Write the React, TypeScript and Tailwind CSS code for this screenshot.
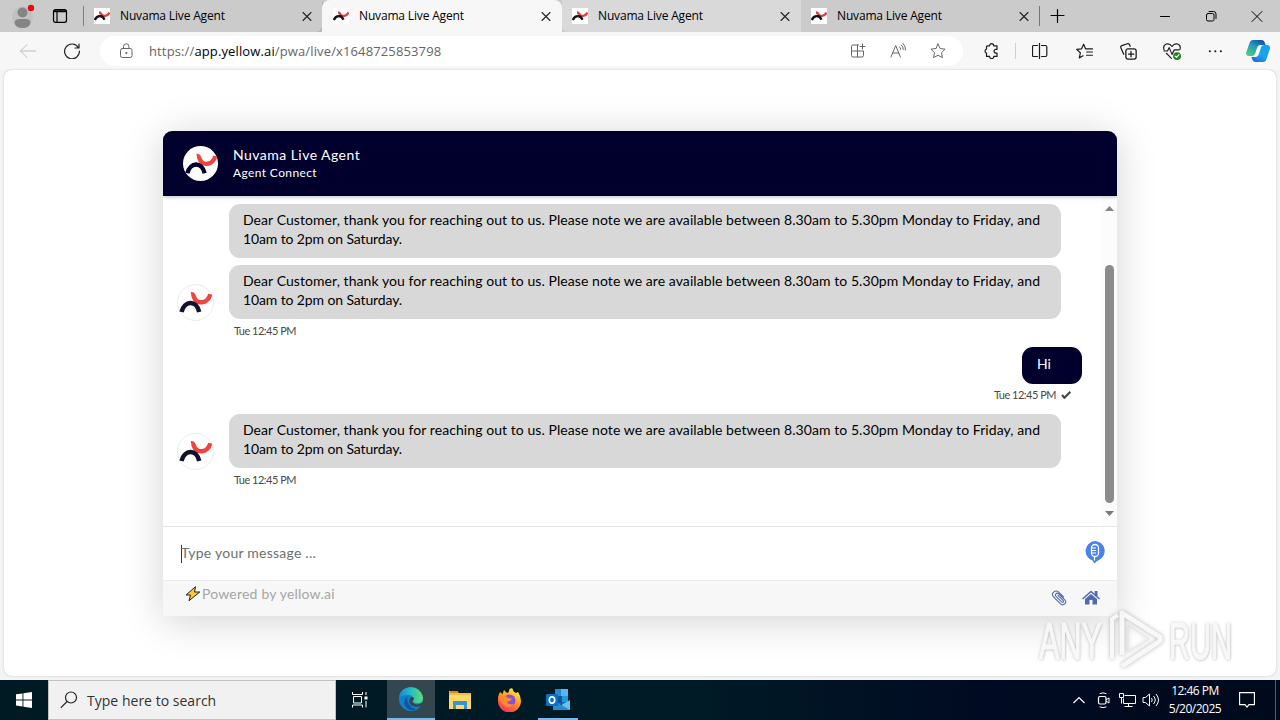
import type { ReactNode } from "react";

const MESSAGE_1 =
  "Dear Customer, thank you for reaching out to us. Please note we are available between 8.30am to 5.30pm Monday to Friday, and";
const MESSAGE_2 = "10am to 2pm on Saturday.";

function Icon({ children, className = "size-4" }: { children: ReactNode; className?: string }) {
  return (
    <svg viewBox="0 0 16 16" className={`shrink-0 ${className}`} fill="none" stroke="currentColor" strokeWidth="1" strokeLinecap="round" strokeLinejoin="round">
      {children}
    </svg>
  );
}

function Logo({ className, dark = "#12122b" }: { className: string; dark?: string }) {
  return (
    <svg viewBox="0 0 36 36" className={`shrink-0 ${className}`} fill="none" strokeWidth="4.600">
      <path d="M13.500 9.500C15.500 9.200 15.800 10.500 16.500 12.500C19.500 20.500 30.500 19.500 33.200 9.500" stroke="#f0443e" />
      <path d="M3.600 27.800C6.500 16 19 15 21.800 27.800" stroke={dark} />
    </svg>
  );
}

function TabItem({ className }: { className: string }) {
  return (
    <div className={`flex h-8 shrink-0 items-center ${className}`}>
      <div className="flex size-4 items-center justify-center bg-white">
        <svg viewBox="0 0 16 16" className="size-4" fill="none" strokeWidth="2.300">
          <path d="M5 4.500q1.500 0 2.300 1.500c1.500 3 6.500 2.500 8.200-1.500" stroke="#d9413f" />
          <path d="M.8 12c2-5 7.500-5.500 9.700-.3" stroke="#15151c" />
        </svg>
      </div>
      <span className="ml-2.5 w-[180px] whitespace-nowrap text-[12px] tracking-[-0.16px] text-black">Nuvama Live Agent</span>
      <Icon className="-ml-px mr-px size-4 text-[#222]">
        <path d="M4 4.500l8 8M12 4.500l-8 8" strokeWidth="1.100" />
      </Icon>
    </div>
  );
}

function Bubble({ className = "" }: { className?: string }) {
  return (
    <div className={`h-[54px] w-[832px] shrink-0 rounded-[11px] bg-[#d8d8d8] pl-[14px] pt-[6px] text-[14px] leading-[19px] text-black ${className}`}>
      <p className="whitespace-nowrap tracking-[0.07px]">{MESSAGE_1}</p>
      <p className="whitespace-nowrap tracking-[-0.12px]">{MESSAGE_2}</p>
    </div>
  );
}

function AgentRow() {
  return (
    <div className="flex h-[54px] items-start pl-[14px]">
      <div className="mt-[19px] flex size-[37px] shrink-0 items-center justify-center rounded-full border border-[#ececec] bg-white">
        <Logo className="size-[35px]" />
      </div>
      <Bubble className="ml-[15px]" />
    </div>
  );
}

function BrowserChrome() {
  return (
    <>
      <div className="flex h-8 shrink-0 bg-[#cbcbcb]">
        <div className="flex w-[84px] items-center pl-3">
          <svg viewBox="0 0 24 28" className="h-7 w-6">
            <circle cx="10.500" cy="15" r="10.500" fill="#c1c1c1" />
            <circle cx="10.500" cy="10.500" r="5" fill="#858585" />
            <path d="M2.500 21q0-4 5-4h6q5 0 5 4-1 5-8 5t-8-5z" fill="#858585" />
            <circle cx="19" cy="6" r="3.200" fill="#e50b13" />
          </svg>
          <Icon className="ml-4 size-4 text-black">
            <rect x="1.500" y="1.700" width="13" height="12.600" rx="2" strokeWidth="1.200" />
            <path d="M2.500 3.200h11" strokeWidth="2" />
            <path d="M5 3v11" strokeWidth="1.200" />
          </Icon>
          <div className="ml-[15px] h-5 w-px bg-[#7c7c7c]" />
        </div>
        <TabItem className="w-[238px] rounded-br-md pl-[10px] shadow-[1px_1px_2px_#aaa]" />
        <TabItem className="w-[240px] rounded-t-lg bg-[#f7f7f7] pl-[11px]" />
        <TabItem className="w-[239px] rounded-bl-md bg-[#d9d9d9] pl-[10px]" />
        <TabItem className="w-[238px] pl-[10px]" />
        <div className="mt-1.5 h-5 w-px bg-[#757575]" />
        <Icon className="ml-2.5 mt-2 size-4 text-black">
          <path d="M7.500 1.500v13M1 7.500h13" strokeWidth="1.200" />
        </Icon>
        <div className="ml-auto flex items-center gap-[30px] pr-[15px] text-black">
          <Icon><path d="M3.500 8.500h9" /></Icon>
          <Icon><rect x="3.500" y="5.500" width="7.500" height="7.500" rx="1.500" /><path d="M6 3.500h4.500q2.500 0 2.500 2.500v4.500" /></Icon>
          <Icon><path d="M3 3.500l10 10M13 3.500l-10 10" /></Icon>
        </div>
      </div>
      <div className="flex h-[38px] shrink-0 items-center bg-[#f7f7f7]">
        <Icon className="ml-5 size-4 text-[#bdbdbd]"><path d="M15.500 8h-15M7 1.500L.5 8 7 14.500" /></Icon>
        <Icon className="ml-7 size-4 text-[#222]"><path d="M14.300 4.500A7.400 7.400 0 1 0 15.400 8M15 1v4h-4" strokeWidth="1.200" /></Icon>
        <div className="ml-5 flex h-[30px] w-[863px] items-center rounded-full bg-white pl-[18px] text-[#666]">
          <Icon className="size-4">
            <rect x="2.500" y="5.500" width="11.500" height="9" rx="1.800" />
            <path d="M5.500 5.500V3.500a2.700 2.700 0 0 1 5.400 0v2" /><circle cx="8.200" cy="10" r=".6" fill="currentColor" />
          </Icon>
          <span className="ml-[15px] w-[690px] whitespace-nowrap pt-px text-[13px] tracking-[0.13px]">
            https://<span className="text-black">app.yellow.ai</span>/pwa/live/x1648725853798
          </span>
          <Icon className="ml-[11px] size-4">
            <path d="M8.500 2H3q-1.500 0-1.500 1.500v9Q1.500 14 3 14h9q1.500 0 1.500-1.500V8h-12M7.500 2v12M12.500 1v5M10 3.500h5" />
          </Icon>
          <Icon className="ml-6 size-4">
            <path d="M1 14L5.700 2.500 10.400 14M2.700 10h6M9.500 3.800q1.300 1 1.200 2.700M11.300 2q2.300 1.800 2 4.500M13 .5q2.800 2.400 2.500 6.500" />
          </Icon>
          <Icon className="ml-6 size-4">
            <path d="M8 1l2.200 4.500 4.900.7-3.600 3.500.9 4.900L8 12.300l-4.400 2.300.9-4.900L.9 6.200l4.900-.7z" />
          </Icon>
        </div>
        <div className="ml-5 flex items-center text-[#1b1b1b]">
          <Icon><path d="M4.500 2.800h2a2.100 2.100 0 0 1 4.200 0H14v3.500h-1a1.900 1.900 0 0 0 0 3.800h1v3.300h-3.200a2.100 2.100 0 0 1-4.200 0H3.500v-3.300a2.100 2.100 0 0 1 0-4V3.800q0-1 1-1z" strokeWidth="1.200" /></Icon>
          <div className="ml-[16px] h-4 w-px bg-[#d0d0d0]" />
          <Icon className="ml-[16px] size-4"><path d="M7.500.5v15M5.500 2.500h-4Q.5 2.500.5 4v8q0 1.500 1 1.500h4M9.500 2.500h4q1.300 0 1.300 1.500v8q0 1.500-1.300 1.500h-4" strokeWidth="1.200" /></Icon>
          <Icon className="ml-7 size-[17px]"><path d="M9 5.500L7.200 1.200 5.300 5.500.6 6l3.500 3.200-1 4.800 3.500-2M9.500 5.500h6M10 8.500h5.500M10 11.500h5.500" strokeWidth="1.100" /></Icon>
          <Icon className="ml-[27px] size-[17px]"><rect x="5.500" y="5.500" width="9.700" height="9.700" rx="2" strokeWidth="1.200" /><path d="M3.500 10.500L.8 4.500q-.4-1.500 1-2L7 .7q1.500-.3 2 1l.5 1.500M10.350 8v5M8 10.400h5" strokeWidth="1.200" /></Icon>
          <Icon className="ml-[26px] size-[18px]"><path d="M1 7.200Q-.5 3.200 3 1.800 6 1 8 4q2-3 5-2.200 3.300 1.300 2 5M1 8h3l1.500-3L8 11l2-4h4M3 10l4.500 4.500" /><circle cx="12.500" cy="12.500" r="3.500" fill="#258022" stroke="none" /><path d="M10.800 12.600l1.200 1.100 2.200-2.400" stroke="white" /></Icon>
          <Icon className="ml-[26px] size-4"><path d="M2.800 8.200h.1M8.300 8.200h.1M13.800 8.200h.1" strokeWidth="2" /></Icon>
          <svg viewBox="0 0 24 24" className="ml-[23px] size-6">
            <defs>
              <linearGradient id="pilotLeft" x1="0" y1="1" x2=".7" y2="0"><stop stopColor="#50d96a" /><stop offset=".6" stopColor="#249ebd" /><stop offset="1" stopColor="#1354ac" /></linearGradient>
              <linearGradient id="pilotRight" x1=".8" y1="0" x2=".2" y2="1"><stop stopColor="#169ff0" /><stop offset=".55" stopColor="#1aa6ea" /><stop offset="1" stopColor="#2465e8" /></linearGradient>
            </defs>
            <path d="M7 1h9q2 0 3 3l.6 2H14q-2 0-3 3l-2 6q-.8 2-3 2H3q-4 0-2.500-4.500L3.500 4Q4.500 1 7 1z" fill="url(#pilotLeft)" />
            <path d="M17 23H9q-2 0-3-3l-.5-2h4q2.500 0 3.300-3l2-6q.8-3 3.500-3H21q4 0 2.700 4.500l-3 9Q19.700 23 17 23z" fill="url(#pilotRight)" />
            <path d="M12 8q1-1.500 3-1.500L12.500 15q-.8 2.500-3.500 2.500z" fill="#f7ffff" />
          </svg>
        </div>
      </div>
    </>
  );
}

function ChatWindow() {
  return (
    <section className="flex h-[485px] w-[954px] flex-col overflow-hidden rounded-t-[9px] bg-white font-[Lato,sans-serif] shadow-[0_5px_40px_rgba(0,0,0,0.18)]">
      <header className="z-10 flex h-[65px] shrink-0 items-center bg-[#01002d] pl-5 text-white shadow-[0_1px_4px_rgba(0,0,0,0.25)]">
        <div className="flex size-[35px] items-center justify-center rounded-full bg-white"><Logo className="size-[34px]" dark="#01002d" /></div>
        <div className="-mt-px ml-[15px]">
          <h1 className="text-[14px] leading-[18px] tracking-[0.46px]">Nuvama Live Agent</h1>
          <p className="text-[12px] leading-[17px] tracking-[0.38px]">Agent Connect</p>
        </div>
      </header>
      <div className="flex h-[330px] shrink-0">
        <div className="w-[939px]">
          <Bubble className="ml-[66px] mt-2" />
          <div className="h-[7px]" />
          <AgentRow />
          <p className="ml-[71px] mt-[5px] h-[14px] whitespace-nowrap text-[11px] leading-[14px] tracking-[-0.5px] text-[#484848]">Tue 12:45 PM</p>
          <div className="ml-[859px] mt-[9px] h-[37px] w-[60px] rounded-[11px] bg-[#01002d] pl-[15px] pt-2 text-[14px] leading-[18px] text-white">Hi</div>
          <div className="ml-[831px] mt-[4px] flex h-[14px] items-center whitespace-nowrap text-[11px] tracking-[-0.5px] text-[#484848]">
            <span className="w-[67px]">Tue 12:45 PM</span>
            <Icon className="size-[10px]"><path d="M1.500 8l4 4.500L15 3" strokeWidth="3.500" strokeLinecap="butt" /></Icon>
          </div>
          <div className="h-3" />
          <AgentRow />
          <p className="ml-[71px] mt-[5px] h-[14px] whitespace-nowrap text-[11px] leading-[14px] tracking-[-0.5px] text-[#484848]">Tue 12:45 PM</p>
        </div>
        <div className="flex w-[15px] flex-col items-center bg-[#fcfcfc] pt-[10px]">
          <svg viewBox="0 0 9 5" className="h-[5px] w-[9px]"><path d="M0 5L4.500 0 9 5z" fill="#858585" /></svg>
          <div className="mt-[54px] h-[238px] w-[9px] rounded-full bg-[#8b8b8b]" />
          <svg viewBox="0 0 9 5" className="mt-2 h-[5px] w-[9px]"><path d="M0 0L4.500 5 9 0z" fill="#777" /></svg>
        </div>
      </div>
      <div className="flex h-[54px] shrink-0 items-center border-t border-[#e7e7e7] pl-[18px]">
        <div className="h-[18px] w-px bg-[#333]" />
        <span className="-ml-px -mt-0.5 whitespace-nowrap text-[14px] tracking-[0.24px] text-[#6f6f6f]">Type your message ...</span>
        <svg viewBox="0 0 22 24" className="-mt-1 ml-auto mr-[11px] h-6 w-[22px]">
          <path d="M11 1a10 10 0 0 1 4 19q-3 1-4.500 3.500Q9 22 8.500 20.500A10 10 0 0 1 11 1z" fill="#4b82e9" />
          <rect x="7.500" y="4.500" width="7" height="12" rx="3.500" fill="#4b82e9" stroke="white" strokeWidth="1.300" />
          <path d="M8 8h4M8 10.500h4M8 13h4M10.500 16.500v4" stroke="white" strokeWidth="1.200" />
        </svg>
      </div>
      <footer className="flex h-9 shrink-0 border-t border-[#ebebeb] bg-[#f7f7f7] pl-[22px]">
        <svg viewBox="0 0 16 16" className="mt-[5px] size-4"><path d="M10.500.7L1 9h4.500L4 14.700 14.800 6H9.500z" fill="#ffc83d" stroke="#222" strokeWidth="1" /></svg>
        <span className="ml-px whitespace-nowrap pt-1 text-[14px] leading-[17px] tracking-[0.2px] text-[#a5a5a5]">Powered by yellow.ai</span>
        <svg viewBox="0 0 16 16" className="ml-auto mt-[9px] size-4" fill="none" stroke="#526aaf" strokeWidth="1.100" strokeLinecap="round">
          <path d="M12.500 7L7.400 1.900C4-.8-.5 3.700 2.500 6.800l7 7.100c3 2.500 6.800-1.200 4.300-4L7.500 3.700C5.600 2.200 3.300 4.500 5 6.300l5.600 5.600c1.400 1 2.500-.2 1.500-1.500L7 5.300" />
        </svg>
        <svg viewBox="0 0 18 16" className="ml-[15px] mr-[17px] mt-[9px] h-4 w-[18px]">
          <path d="M9 .5L0 8.500l1 1L9 2.600l8 6.900 1-1-2.500-2.200V1h-2.800v2.800z" fill="#526aaf" />
          <path d="M3 9l6-5.100L15 9v5.500h-4.500V10h-3v4.500H3z" fill="#526aaf" />
        </svg>
      </footer>
    </section>
  );
}

function Watermark() {
  return (
    <div className="absolute left-[1039px] top-[607px] flex h-16 w-[200px] items-center opacity-90">
      <span className="mt-1 w-[65px] origin-left scale-x-[0.6] text-[51px] leading-none text-[#f8f8f8] font-['Liberation_Sans',sans-serif] [-webkit-text-stroke:1.5px_#f8f8f8] [text-shadow:0_0_4px_#aaa,1px_1px_3px_#bbb]">ANY</span>
      <svg viewBox="0 0 58 64" className="ml-1 h-16 w-[58px] shrink-0 drop-shadow-[0_0_2px_#aaa]" fill="none" stroke="#f8f8f8">
        <path d="M4 52V12l6-4" strokeWidth="4" /><path d="M14 48V6l38 24v4L14 59" strokeWidth="5" strokeLinejoin="round" /><path d="M20 18v27l21-13z" strokeWidth="1" stroke="#ddd" />
      </svg>
      <span className="ml-[3px] mt-1 w-[66px] origin-left scale-x-[0.57] text-[51px] leading-none text-[#f8f8f8] font-['Liberation_Sans',sans-serif] [-webkit-text-stroke:1.5px_#f8f8f8] [text-shadow:0_0_4px_#aaa,1px_1px_3px_#bbb]">RUN</span>
    </div>
  );
}

function Taskbar() {
  return (
    <footer className="flex h-10 shrink-0 bg-[linear-gradient(90deg,#001a24_0%,#001a26_55%,#000a22_78%,#000a1d_100%)] text-white">
      <div className="flex w-12 items-center justify-center">
        <svg viewBox="0 0 16 16" className="size-4" fill="white"><path d="M0 2.300L6.500 1.400v6.100H0zM7.400 1.200L16 0v7.500H7.400zM0 8.400h6.500v6.100L0 13.600zM7.400 8.400H16V16l-8.600-1.200z" /></svg>
      </div>
      <div className="flex w-72 items-center border border-[#c1c1c1] bg-[#f1f1f1] pl-[11px] text-[#333]">
        <svg viewBox="0 0 18 18" className="size-[18px]" fill="none" stroke="#222" strokeWidth="1.200"><circle cx="11" cy="6.500" r="5.500" /><path d="M7 10.500L.8 16.800" /></svg>
        <span className="ml-[9px] text-[14px] tracking-[0.02px]">Type here to search</span>
      </div>
      <div className="flex w-[51px] items-center pl-[15px]">
        <svg viewBox="0 0 18 18" className="size-[18px]" fill="none" stroke="white"><path d="M1.500 1v2.500h10V1M1.500 16.500V14h10v2.500M2.500 5.500h8v6.500h-8zM15 1v3M15 10v6.500" /><path d="M13.500 7h3" strokeWidth="3" /></svg>
      </div>
      <div className="flex w-12 items-center justify-center border-b-2 border-[#76b9ed] bg-[#35474e]">
        <svg viewBox="0 0 24 24" className="size-6">
          <defs><linearGradient id="edgeTop"><stop stopColor="#1389d3" /><stop offset=".5" stopColor="#26bfc4" /><stop offset="1" stopColor="#66dc65" /></linearGradient></defs>
          <circle cx="12" cy="12" r="12" fill="#1380cf" />
          <path d="M.2 10C1-2 21-4 24 10.500c.4 7-8.500 7-10.500 3.800 2-2 1-6.300-4.500-6.300C3 8 .5 11 .2 10z" fill="url(#edgeTop)" />
          <path d="M8.500 9C0 17 10 27 17.500 22 12 22 6.500 15 8.500 9z" fill="#1056a0" />
          <path d="M13.500 10c3 1 .5 3.700 0 4.500 1 4 7 3 8.500 2l2.500-1-1 4-3 0C15 20.500 10.500 18 10.500 15.500c-1-3 1-6 3-5.500z" fill="#35474e" />
        </svg>
      </div>
      <div className="flex w-[49px] items-center justify-center">
        <svg viewBox="0 0 22 20" className="h-5 w-[22px]"><path d="M0 1h8l2 2h12v16H0z" fill="#f0bd42" /><path d="M0 5h22v14H0z" fill="#ffd968" /><path d="M1 1h8v2H1z" fill="#d28c1a" /><path d="M4 11h14v8h-3v-4H7v4H4z" fill="#3994d4" /></svg>
      </div>
      <div className="flex w-[49px] items-center justify-center">
        <svg viewBox="0 0 24 24" className="size-6">
          <defs><linearGradient id="fox" x1=".8" y1="0" x2=".25" y2="1"><stop stopColor="#fff44b" /><stop offset=".45" stopColor="#ff9921" /><stop offset="1" stopColor="#f52763" /></linearGradient></defs>
          <path d="M3 4l2.500 2L7 2l3 3q2 0 2.500-4 2-1 3-.5Q16 4 19 5l2-1q3 4 3 9a11.500 11.500 0 0 1-23 0Q.5 8 3 4z" fill="url(#fox)" />
          <circle cx="12.500" cy="12.500" r="6" fill="#8151df" /><path d="M3 10q5-4 8 0l4 .5q-1 3-5 3 1 4 7 2.500-4 5-9 2-4-2-5-8z" fill="#ff8a2b" />
        </svg>
      </div>
      <div className="flex w-[49px] flex-col items-center justify-between">
        <svg viewBox="0 0 24 22" className="mt-[9px] h-[22px] w-6"><path d="M9 0h13v15H9z" fill="#1066b5" /><path d="M9 0h6v7H9z" fill="#2489d8" /><path d="M15 0h7v7h-7z" fill="#55b9ef" /><path d="M9 7h7v7H9z" fill="#125594" /><path d="M16 7h6v6h-6z" fill="#2299e3" /><path d="M7 11l8 5 9-5v10H7z" fill="#65c2ed" /><path d="M7 11l17 10H7z" fill="#278bd1" /><rect y="5" width="12" height="12" rx="1" fill="#0870c6" /><ellipse cx="6" cy="11" rx="2.700" ry="3.100" fill="none" stroke="white" strokeWidth="1.600" /></svg>
        <div className="h-0.5 w-10 bg-[#76b9ed]" />
      </div>
      <div className="ml-auto flex items-center pr-1">
        <svg viewBox="0 0 12 8" className="h-2 w-3" fill="none" stroke="white" strokeWidth="1.200"><path d="M.5 7L6 1.500 11.500 7" /></svg>
        <Icon className="ml-[10px] size-4"><path d="M5 1.500q3-1.500 6 0M5 15q3 1.500 6 0" /><rect x="3.500" y="4.500" width="7.500" height="7.500" rx="1.500" strokeWidth="1.200" /><path d="M11.500 7.500l2.500-1.500v5l-2.500-1.500" /></Icon>
        <svg viewBox="0 0 17 16" className="ml-2 h-4 w-[17px]" fill="none" stroke="white"><path d="M5.500 3.500h11v8h-12v-5M9.500 12v2.500M5.500 14.500h8M.5 1.500h4v4h-4zM2.500 5.500v6" /></svg>
        <svg viewBox="0 0 18 16" className="ml-[6px] h-4 w-[18px]" fill="none" stroke="white"><path d="M1 5.500h2.500l4-3.500v12l-4-3.500H1zM9.500 6q1.500 2 0 4M11.500 4q3.500 4 0 8M14 2q5 6 0 12" /></svg>
        <div className="ml-[8px] flex w-[54px] flex-col items-center whitespace-nowrap text-[12px] leading-[18px] tracking-[-0.5px]"><span>12:46 PM</span><span>5/20/2025</span></div>
        <svg viewBox="0 0 16 16" className="ml-[17px] mr-5 size-4" fill="none" stroke="white" strokeWidth="1.100"><path d="M.6.600h14.800v12H10l-2 2.500-2-2.500H.6z" /></svg>
        <div className="h-10 w-px bg-[#55606b]" />
      </div>
    </footer>
  );
}

export default function App() {
  return (
    <main className="relative flex h-[720px] w-[1280px] flex-col overflow-hidden bg-[#f3f4f4] font-['Open_Sans',sans-serif]">
      <BrowserChrome />
      <div className="mx-1 mb-1 flex h-[606px] shrink-0 justify-center overflow-hidden rounded-lg bg-white pt-[61px] shadow-[0_0_2px_#bbb]">
        <ChatWindow />
      </div>
      <Taskbar />
      <Watermark />
    </main>
  );
}
